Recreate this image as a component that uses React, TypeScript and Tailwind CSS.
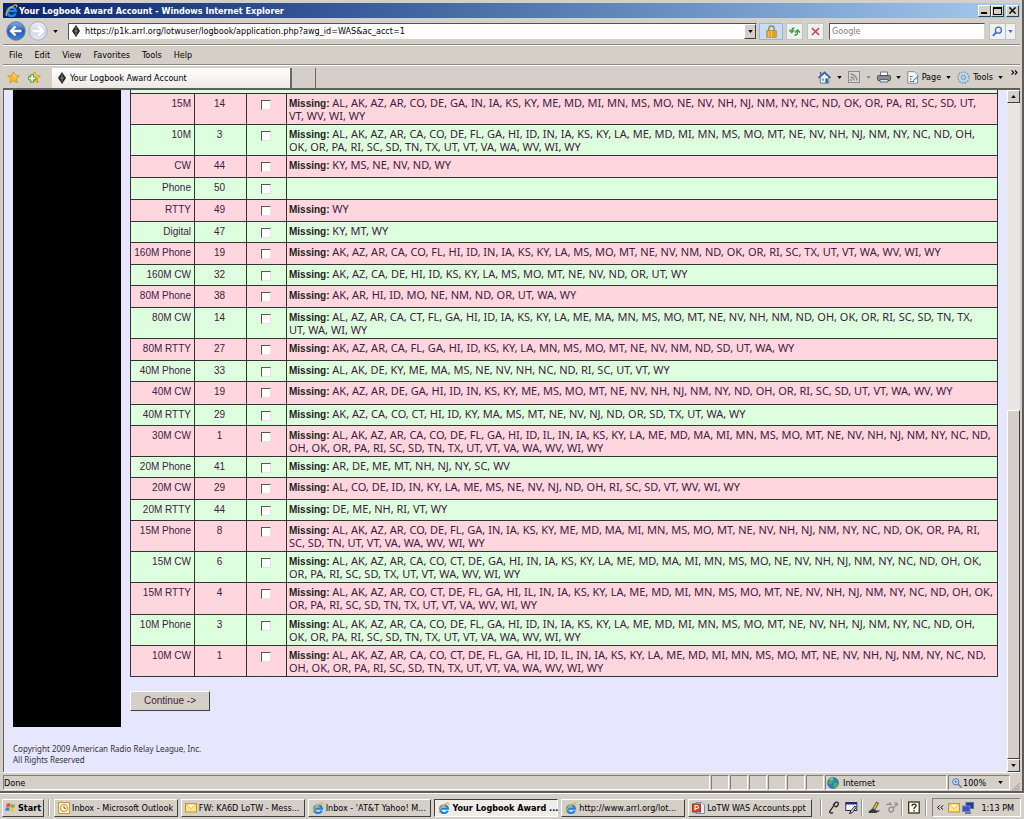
import type { ReactNode } from "react";
import clsx from "clsx";

type AwardRow = {
  name: string;
  count: number;
  missing: string[];
};

const rows: AwardRow[] = [
  { name: "15M", count: 14, missing: ["AL, AK, AZ, AR, CO, DE, GA, IN, IA, KS, KY, ME, MD, MI, MN, MS, MO, NE, NV, NH, NJ, NM, NY, NC, ND, OK, OR, PA, RI, SC, SD, UT,", "VT, WV, WI, WY"] },
  { name: "10M", count: 3, missing: ["AL, AK, AZ, AR, CA, CO, DE, FL, GA, HI, ID, IN, IA, KS, KY, LA, ME, MD, MI, MN, MS, MO, MT, NE, NV, NH, NJ, NM, NY, NC, ND, OH,", "OK, OR, PA, RI, SC, SD, TN, TX, UT, VT, VA, WA, WV, WI, WY"] },
  { name: "CW", count: 44, missing: ["KY, MS, NE, NV, ND, WY"] },
  { name: "Phone", count: 50, missing: [] },
  { name: "RTTY", count: 49, missing: ["WY"] },
  { name: "Digital", count: 47, missing: ["KY, MT, WY"] },
  { name: "160M Phone", count: 19, missing: ["AK, AZ, AR, CA, CO, FL, HI, ID, IN, IA, KS, KY, LA, MS, MO, MT, NE, NV, NM, ND, OK, OR, RI, SC, TX, UT, VT, WA, WV, WI, WY"] },
  { name: "160M CW", count: 32, missing: ["AK, AZ, CA, DE, HI, ID, KS, KY, LA, MS, MO, MT, NE, NV, ND, OR, UT, WY"] },
  { name: "80M Phone", count: 38, missing: ["AK, AR, HI, ID, MO, NE, NM, ND, OR, UT, WA, WY"] },
  { name: "80M CW", count: 14, missing: ["AL, AZ, AR, CA, CT, FL, GA, HI, ID, IA, KS, KY, LA, ME, MA, MN, MS, MO, MT, NE, NV, NH, NM, ND, OH, OK, OR, RI, SC, SD, TN, TX,", "UT, WA, WI, WY"] },
  { name: "80M RTTY", count: 27, missing: ["AK, AZ, AR, CA, FL, GA, HI, ID, KS, KY, LA, MN, MS, MO, MT, NE, NV, NM, ND, SD, UT, WA, WY"] },
  { name: "40M Phone", count: 33, missing: ["AL, AK, DE, KY, ME, MA, MS, NE, NV, NH, NC, ND, RI, SC, UT, VT, WY"] },
  { name: "40M CW", count: 19, missing: ["AK, AZ, AR, DE, GA, HI, ID, IN, KS, KY, ME, MS, MO, MT, NE, NV, NH, NJ, NM, NY, ND, OH, OR, RI, SC, SD, UT, VT, WA, WV, WY"] },
  { name: "40M RTTY", count: 29, missing: ["AK, AZ, CA, CO, CT, HI, ID, KY, MA, MS, MT, NE, NV, NJ, ND, OR, SD, TX, UT, WA, WY"] },
  { name: "30M CW", count: 1, missing: ["AL, AK, AZ, AR, CA, CO, DE, FL, GA, HI, ID, IL, IN, IA, KS, KY, LA, ME, MD, MA, MI, MN, MS, MO, MT, NE, NV, NH, NJ, NM, NY, NC, ND,", "OH, OK, OR, PA, RI, SC, SD, TN, TX, UT, VT, VA, WA, WV, WI, WY"] },
  { name: "20M Phone", count: 41, missing: ["AR, DE, ME, MT, NH, NJ, NY, SC, WV"] },
  { name: "20M CW", count: 29, missing: ["AL, CO, DE, ID, IN, KY, LA, ME, MS, NE, NV, NJ, ND, OH, RI, SC, SD, VT, WV, WI, WY"] },
  { name: "20M RTTY", count: 44, missing: ["DE, ME, NH, RI, VT, WY"] },
  { name: "15M Phone", count: 8, missing: ["AL, AK, AZ, AR, CO, DE, FL, GA, IN, IA, KS, KY, ME, MD, MA, MI, MN, MS, MO, MT, NE, NV, NH, NJ, NM, NY, NC, ND, OK, OR, PA, RI,", "SC, SD, TN, UT, VT, VA, WA, WV, WI, WY"] },
  { name: "15M CW", count: 6, missing: ["AL, AK, AZ, AR, CA, CO, CT, DE, GA, HI, IN, IA, KS, KY, LA, ME, MD, MA, MI, MN, MS, MO, NE, NV, NH, NJ, NM, NY, NC, ND, OH, OK,", "OR, PA, RI, SC, SD, TX, UT, VT, WA, WV, WI, WY"] },
  { name: "15M RTTY", count: 4, missing: ["AL, AK, AZ, AR, CO, CT, DE, FL, GA, HI, IL, IN, IA, KS, KY, LA, ME, MD, MI, MN, MS, MO, MT, NE, NV, NH, NJ, NM, NY, NC, ND, OH, OK,", "OR, PA, RI, SC, SD, TN, TX, UT, VT, VA, WV, WI, WY"] },
  { name: "10M Phone", count: 3, missing: ["AL, AK, AZ, AR, CA, CO, DE, FL, GA, HI, ID, IN, IA, KS, KY, LA, ME, MD, MI, MN, MS, MO, MT, NE, NV, NH, NJ, NM, NY, NC, ND, OH,", "OK, OR, PA, RI, SC, SD, TN, TX, UT, VT, VA, WA, WV, WI, WY"] },
  { name: "10M CW", count: 1, missing: ["AL, AK, AZ, AR, CA, CO, CT, DE, FL, GA, HI, ID, IL, IN, IA, KS, KY, LA, ME, MD, MI, MN, MS, MO, MT, NE, NV, NH, NJ, NM, NY, NC, ND,", "OH, OK, OR, PA, RI, SC, SD, TN, TX, UT, VT, VA, WA, WV, WI, WY"] },
];

const raised = "border border-t-white border-l-white border-r-[#404040] border-b-[#404040] bg-[#d4d0c8]";
const sunken = "border border-t-[#808080] border-l-[#808080] border-r-white border-b-white";

function IeIcon({ className = "size-3" }: { className?: string }) {
  return (
    <svg viewBox="0 0 16 16" className={clsx("shrink-0", className)} fill="none">
      <path d="M13 11.500A5.300 5.300 0 1113.300 8.800H4" stroke="#1f86e0" strokeWidth="3" />
      <path d="M4.500 5.500A5 5 0 0110 4" stroke="#8ed0fb" strokeWidth="1.200" />
      <path d="M2 14.500C-.5 12 6 3.500 11.500 1.500c3-1 3.500.5 2.500 2.500" stroke="#f0b428" strokeWidth="1.500" />
    </svg>
  );
}

function DiamondIcon() {
  return (
    <svg viewBox="0 0 8 12" className="h-3 w-2 shrink-0">
      <path d="M4 0l4 6-4 6-4-6z" fill="#222" />
      <path d="M4 2v8M2 6h4" stroke="#aaa" strokeWidth=".7" />
    </svg>
  );
}

function Caret({ className = "text-black" }: { className?: string }) {
  return (
    <svg viewBox="0 0 6 4" className={clsx("h-[3px] w-[5px] shrink-0", className)}>
      <path d="M0 0h6L3 4z" fill="currentColor" />
    </svg>
  );
}

function NavArrow({ forward = false }: { forward?: boolean }) {
  return (
    <svg viewBox="0 0 20 20" className="size-5">
      <defs>
        <linearGradient id={forward ? "nav-f" : "nav-b"} x1="0" y1="0" x2="0" y2="1">
          <stop offset="0" stopColor={forward ? "#f2f5f9" : "#8eb2e6"} />
          <stop offset=".5" stopColor={forward ? "#ccd5e2" : "#2458b4"} />
          <stop offset="1" stopColor={forward ? "#e4ebf4" : "#3f86dc"} />
        </linearGradient>
      </defs>
      <circle cx="10" cy="10" r="9.2" fill={forward ? "url(#nav-f)" : "url(#nav-b)"} stroke={forward ? "#9daec6" : "#5877a8"} />
      <path
        d={forward ? "M4.500 10h10M10.500 5.500L15 10l-4.500 4.500" : "M15.500 10h-10M9.500 5.500L5 10l4.500 4.500"}
        fill="none"
        stroke="#fff"
        strokeWidth="2.400"
      />
    </svg>
  );
}

function StarIcon({ plus = false }: { plus?: boolean }) {
  return (
    <svg viewBox="0 0 14 14" className="size-[13px]">
      <path d="M7 .8l1.900 4 4.400.5-3.200 3 .9 4.400L7 10.500l-4 2.200.9-4.400-3.200-3 4.400-.5z" fill="#fbb829" stroke="#d98a12" strokeWidth=".8" />
      <path d="M7 3l1 2.600 2.500.4" fill="none" stroke="#ffe9a0" />
      {plus && <path d="M3 4h3v2.500h2.500v3H6V12H3V9.500H.5v-3H3z" fill="#e2ffd8" stroke="#35a02b" />}
    </svg>
  );
}

function TitleBar() {
  return (
    <header className="flex h-[15px] items-center bg-linear-to-r from-[#0a246a] to-[#a6caf0] pr-px pl-[2px]">
      <IeIcon className="size-[13px]" />
      <h1 className="ml-px flex-1 text-[9px] leading-3 font-bold text-white">
        Your Logbook Award Account - Windows Internet Explorer
      </h1>
      <button aria-label="Minimize" className={clsx("flex h-3 w-[13px] items-end p-[2px]", raised)}>
        <span className="h-[2px] w-[6px] bg-black" />
      </button>
      <button aria-label="Restore" className={clsx("flex h-3 w-[13px] items-center justify-center", raised)}>
        <span className="h-2 w-[9px] border border-t-2 border-black" />
      </button>
      <button aria-label="Close" className={clsx("ml-[2px] flex h-3 w-[13px] items-center justify-center", raised)}>
        <svg viewBox="0 0 8 8" className="size-[7px]">
          <path d="M.5.5l7 7M7.500.5l-7 7" stroke="#000" strokeWidth="1.600" />
        </svg>
      </button>
    </header>
  );
}

function ToolButton({ label, children, className }: { label: string; children: ReactNode; className?: string }) {
  return (
    <button aria-label={label} className={clsx("flex h-[17px] items-center justify-center border", className)}>
      {children}
    </button>
  );
}

const plainTool = "border-[#b9c2d0] bg-[#f0f0ee]";

function AddressBar() {
  return (
    <div className="flex h-[27px] items-center border-b border-[#8d8a84] pr-1 pl-[3px]">
      <button aria-label="Back"><NavArrow /></button>
      <button aria-label="Forward" className="ml-[2px]"><NavArrow forward /></button>
      <button aria-label="Recent pages" className="ml-[5px] flex h-4 w-[6px] items-center"><Caret /></button>
      <div className="ml-[9px] flex h-[17px] flex-1 items-center border border-t-[#55505a] border-r-[#d4d0c8] border-b-[#d4d0c8] border-l-[#55505a] bg-white pl-[3px]">
        <DiamondIcon />
        <input
          aria-label="Address"
          className="ml-[5px] h-3 min-w-0 flex-1 bg-transparent text-[9px] leading-3 text-black outline-none"
          defaultValue="https://p1k.arrl.org/lotwuser/logbook/application.php?awg_id=WAS&ac_acct=1"
        />
        <button aria-label="Show address list" className={clsx("flex h-[15px] w-3 items-center justify-center", raised)}><Caret /></button>
      </div>
      <ToolButton label="Security report" className="ml-[2px] w-[24px] border-[#8fb6e8] bg-[#c9dcf5]">
        <svg viewBox="0 0 12 14" className="h-[13px] w-[11px]">
          <path d="M3 7V4a3 3 0 016 0v3" fill="none" stroke="#a28b4a" strokeWidth="1.500" />
          <rect x=".8" y="6" width="10.400" height="7.500" fill="#e2a325" stroke="#a8761a" strokeWidth=".6" />
          <path d="M3 6.500v7M6 6.500v7" stroke="#f6ca62" />
        </svg>
      </ToolButton>
      <ToolButton label="Refresh" className={clsx("ml-[3px] w-[17px]", plainTool)}>
        <svg viewBox="0 0 14 12" className="h-[11px] w-[13px]" fill="none" stroke="#2f9a35" strokeWidth="1.500">
          <path d="M7 2.500C5.500 2 4 3 4 5.500M1.200 4.300L4 7l2.500-2.700M7 10c2 .3 3.300-.8 3.300-4M7.500 7l2.800-2.700L13 7" />
        </svg>
      </ToolButton>
      <ToolButton label="Stop" className={clsx("ml-1 w-[17px]", plainTool)}>
        <svg viewBox="0 0 10 10" className="size-[9px]">
          <path d="M1 1l8 8M9 1L1 9" stroke="#d03440" strokeWidth="1.500" />
        </svg>
      </ToolButton>
      <input
        aria-label="Search"
        placeholder="Google"
        className="ml-[5px] h-[17px] w-[156px] border border-t-[#55505a] border-r-[#d4d0c8] border-b-[#d4d0c8] border-l-[#55505a] bg-white px-[2px] text-[9px] leading-3 outline-none placeholder:text-[#808080]"
      />
      <ToolButton label="Run search" className={clsx("ml-1 w-[17px]", plainTool)}>
        <svg viewBox="0 0 12 12" className="size-[11px]" fill="none" stroke="#3a6fd0">
          <circle cx="7" cy="4.500" r="3.300" strokeWidth="1.400" />
          <path d="M4.500 7L1 10.800" strokeWidth="2" />
        </svg>
      </ToolButton>
      <ToolButton label="Search options" className={clsx("w-[10px] border-l-0", plainTool)}>
        <Caret className="text-[#3a6fd0]" />
      </ToolButton>
    </div>
  );
}

function MenuBar() {
  return (
    <nav className="flex h-[20px] items-center gap-3 border-t border-b border-t-white border-b-[#8d8a84] pl-[6px] text-[9px] leading-3">
      {["File", "Edit", "View", "Favorites", "Tools", "Help"].map((item) => (
        <button key={item}>{item}</button>
      ))}
    </nav>
  );
}

function TabBar() {
  return (
    <div className="flex h-[23px] items-center border-t border-white pr-[2px] text-[9px] leading-3">
      <button aria-label="Favorites center" className="ml-1"><StarIcon /></button>
      <button aria-label="Add to favorites" className="ml-[8px]"><StarIcon plus /></button>
      <button className="mt-[2px] ml-[11px] flex h-[20px] w-[240px] items-center border-r-2 border-[#6b6862] bg-linear-to-b from-white to-[#eceae5] pl-[6px]">
        <DiamondIcon />
        <span className="ml-[4px]">Your Logbook Award Account</span>
      </button>
      <button aria-label="New tab" className="mt-[2px] h-[20px] w-[24px] border-r border-[#6b6862]" />
      <div className="ml-auto flex items-center">
        <button aria-label="Home" className="flex items-center gap-[6px]">
          <svg viewBox="0 0 14 14" className="size-[13px]">
            <path d="M2.500 6.500V13h9V6.500L7 2.500z" fill="#eef3fb" stroke="#5577b5" />
            <path d="M.5 7.500L7 1.500l6.500 6" fill="none" stroke="#3b5fa8" strokeWidth="1.700" />
            <path d="M8 8h2.500v5H8z" fill="#456" />
            <path d="M4 8h2.500v2.500H4z" fill="#74a3e0" />
            <path d="M2 1h1.500v3H2z" fill="#3b5fa8" />
          </svg>
          <Caret />
        </button>
        <button aria-label="Feeds" className="ml-[6px] flex items-center gap-[6px]">
          <svg viewBox="0 0 12 12" className="size-3" fill="none" stroke="#8b8b8b">
            <rect x=".5" y=".5" width="11" height="11" fill="#d9d8d4" />
            <path d="M2.500 3c3.500 0 6.500 3 6.500 6.500M2.500 6c2 0 3.500 1.500 3.500 3.500" strokeWidth="1.400" />
            <circle cx="3" cy="9" r=".7" />
          </svg>
          <Caret className="text-[#8b8b8b]" />
        </button>
        <button aria-label="Print" className="ml-[6px] flex items-center gap-[5px]">
          <svg viewBox="0 0 14 12" className="h-3 w-[14px]">
            <path d="M3.500 5V1h7v4" fill="#fff" stroke="#777" />
            <rect x=".5" y="4.500" width="13" height="5" rx="1" fill="#8a8f96" stroke="#4c5056" />
            <path d="M3 8.500h8V11H3z" fill="#d8e6f8" stroke="#4c5056" strokeWidth=".8" />
          </svg>
          <Caret />
        </button>
        <button className="ml-[6px] flex items-center gap-[5px]">
          <svg viewBox="0 0 12 13" className="mr-[-2px] h-[13px] w-3">
            <path d="M.8.7h6.700l3 3v8.500H.8z" fill="#fff" stroke="#888" />
            <path d="M3 5.500h3M3 8h2M3 10.500h4" stroke="#333" strokeDasharray="1.500 1" />
            <path d="M6.500 9.500L11.500 5" stroke="#4f9bd8" strokeWidth="1.500" />
          </svg>
          <span>Page</span>
          <Caret />
        </button>
        <button className="ml-[6px] flex items-center gap-[5px]">
          <svg viewBox="0 0 14 14" className="mr-[-2px] size-[13px]" fill="none">
            <circle cx="7" cy="7" r="5.800" stroke="#6d8eb0" strokeWidth="1.600" strokeDasharray="2 1" />
            <circle cx="7" cy="7" r="4" stroke="#b8d8f0" strokeWidth="3" />
            <circle cx="7" cy="7" r="2.300" stroke="#6d8eb0" />
          </svg>
          <span>Tools</span>
          <Caret />
        </button>
        <button aria-label="More commands" className="mb-[10px] ml-[8px]">
          <svg viewBox="0 0 8 6" className="h-[5px] w-[7px]" fill="none" stroke="#000" strokeWidth="1.300">
            <path d="M.5.5L3 3 .5 5.500M4.500.5L7 3 4.500 5.500" />
          </svg>
        </button>
      </div>
    </div>
  );
}

function AwardTable() {
  return (
    <table className="h-[584px] w-full table-fixed border-collapse text-[10px] leading-[13px] text-[#40203f]">
      <colgroup>
        <col className="w-16" />
        <col className="w-[52px]" />
        <col className="w-10" />
        <col />
      </colgroup>
      <tbody>
        {rows.map((row, index) => (
          <tr
            key={row.name}
            className={clsx(
              index % 2 === 0 ? "bg-[#ffd6de]" : "bg-[#deffde]",
              row.missing.length > 1 ? "h-[31px]" : index % 2 === 0 ? "h-[22px]" : "h-[21px]",
            )}
          >
            <th scope="row" className="border border-[#333] pt-[3px] pr-[3px] text-right align-top font-normal whitespace-nowrap">
              {row.name}
            </th>
            <td className="border border-[#333] pt-[3px] pr-[2px] text-center align-top">{row.count}</td>
            <td className="border border-[#333] pt-[6px] pr-[2px] text-center align-top">
              <input
                type="checkbox"
                aria-label={`Select ${row.name}`}
                className="mx-auto block size-[10px] appearance-none border border-t-[#555] border-r-[#e8e4de] border-b-[#e8e4de] border-l-[#555] bg-white"
              />
            </td>
            <td className="border border-[#333] px-[2px] pt-[2px] align-top whitespace-nowrap">
              {row.missing.map((line, i) => (
                <p key={line} className="h-[13px] font-['Noto_Sans',sans-serif] text-[11px] leading-[13px]">
                  {i === 0 && (
                    <b className="font-['Liberation_Sans',Arial,sans-serif] text-[10px] text-[#222]">Missing: </b>
                  )}
                  {line}
                </p>
              ))}
            </td>
          </tr>
        ))}
      </tbody>
    </table>
  );
}

function ScrollBar() {
  return (
    <div className="flex w-[13px] shrink-0 flex-col bg-[#e9e7e3]">
      <button aria-label="Scroll up" className={clsx("flex h-[13px] items-center justify-center", raised)}>
        <Caret className="rotate-180 text-black" />
      </button>
      <div className="flex-[308]" />
      <div className={clsx("flex-[348]", raised)} />
      <button aria-label="Scroll down" className={clsx("flex h-[13px] items-center justify-center", raised)}>
        <Caret />
      </button>
    </div>
  );
}

function StatusBar() {
  return (
    <footer className="flex h-[19px] items-center gap-px border-t border-white pt-px text-[9px] leading-3">
      <div className={clsx("flex h-[15px] flex-1 items-center", sunken)}>Done</div>
      {[0, 1, 2, 3, 4].map((pane) => (
        <div key={pane} className={clsx("h-[15px] w-[18px]", sunken)} />
      ))}
      <div className={clsx("h-[15px] w-[18px]", sunken)} />
      <div className={clsx("flex h-[15px] w-[122px] items-center gap-1 pl-[1px]", sunken)}>
        <svg viewBox="0 0 12 12" className="size-3">
          <circle cx="6" cy="6" r="5.500" fill="#2f7fc4" stroke="#245a86" strokeWidth=".6" />
          <path d="M2 3.500C4 .5 6 1 7 2.500S5 5 4.500 6.500 2 6 1 6.500zM7 6c2-1 4 0 4 1.500S9 11 8 11 6 8 7 6z" fill="#4bb05a" />
          <path d="M3 3c1-1.200 2-1.500 3-1.500" stroke="#c9ecff" fill="none" />
        </svg>
        Internet
      </div>
      <div className={clsx("flex h-[15px] w-[62px] items-center pl-[3px]", sunken)}>
        <svg viewBox="0 0 12 12" className="size-[10px]" fill="none" stroke="#3c6fc4">
          <circle cx="4.500" cy="4.500" r="3.700" fill="#d8ebff" strokeWidth="1.200" />
          <path d="M2.500 4.500h4M4.500 2.500v4" />
          <path d="M7.500 7.500l4 4" stroke="#777" strokeWidth="1.800" />
        </svg>
        <button className="ml-px flex items-center gap-3">100% <Caret /></button>
      </div>
      <svg viewBox="0 0 10 10" className="size-[9px] self-end" stroke="#8d8a84">
        <path d="M1 10l9-9M4 10l6-6M7 10l3-3" />
      </svg>
    </footer>
  );
}

function OutlookIcon() {
  return (
    <svg viewBox="0 0 12 12" className="size-3 shrink-0">
      <rect x=".5" y=".5" width="11" height="11" fill="#fff2c4" stroke="#d8932a" />
      <circle cx="6" cy="6" r="3.500" fill="#fff" stroke="#c98420" />
      <path d="M6 4v2.200h2" fill="none" stroke="#7a5310" />
    </svg>
  );
}

function MailIcon() {
  return (
    <svg viewBox="0 0 12 10" className="h-[10px] w-3 shrink-0">
      <rect x=".5" y=".5" width="11" height="8.500" fill="#fce38c" stroke="#c9952b" />
      <path d="M.8 1L6 5.500 11.200 1z" fill="#fffbe6" stroke="#d2a03a" strokeWidth=".7" />
    </svg>
  );
}

function PowerPointIcon() {
  return (
    <svg viewBox="0 0 13 12" className="h-3 w-[13px] shrink-0">
      <path d="M4 .5h6l2.500 2.500v8.500H4z" fill="#e8f0fc" stroke="#6f8fc0" />
      <rect x=".5" y="2" width="8" height="8" fill="#d9482a" stroke="#a83218" />
      <path d="M3 8.500v-5h2a1.500 1.500 0 010 3H3" fill="none" stroke="#fff" />
    </svg>
  );
}

const tasks = [
  { title: "Inbox - Microsoft Outlook", icon: <OutlookIcon /> },
  { title: "FW: KA6D LoTW - Mess...", icon: <MailIcon /> },
  { title: "Inbox - 'AT&T Yahoo! M...", icon: <IeIcon /> },
  { title: "Your Logbook Award ...", icon: <IeIcon />, active: true },
  { title: "http://www.arrl.org/lot...", icon: <IeIcon /> },
  { title: "LoTW WAS Accounts.ppt", icon: <PowerPointIcon /> },
];

function Divider() {
  return <span className="h-[17px] w-[2px] border-l border-r border-l-[#999690] border-r-white" />;
}

function TaskBar() {
  return (
    <footer className="flex h-[26px] items-center border-t border-white bg-[#d4d0c8] pt-[2px] pr-[3px] pl-[2px] text-[9px] leading-3">
      <button className={clsx("flex h-[18px] w-[42px] items-center gap-[2px] pl-[2px] font-bold", raised)}>
        <svg viewBox="0 0 12 12" className="size-[11px] shrink-0">
          <path d="M2 2c1.500-1 2.800-.8 4 0L5.200 5.500c-1.300-.8-2.500-.8-4 0z" fill="#e5502c" />
          <path d="M6.700 2.300c1.500.8 3 .8 4.300 0l-.9 3.400c-1.400.8-2.700.8-4.200 0z" fill="#74b92f" />
          <path d="M1 6.300c1.500-.9 2.800-.8 4 0L4.200 9.800c-1.300-.8-2.700-.8-4 0z" fill="#3a7cd8" />
          <path d="M5.700 6.600c1.500.8 2.900.8 4.200 0L9 10c-1.400.8-2.700.8-4.200 0z" fill="#f7c32e" />
        </svg>
        Start
      </button>
      <div className="mx-[4px] flex"><Divider /></div>
      <div className="flex min-w-0 flex-1 gap-[3px]">
        {tasks.map((task) => (
          <button
            key={task.title}
            className={clsx(
              "flex h-[18px] min-w-0 flex-1 basis-0 items-center gap-[2px] border pl-[3px] whitespace-nowrap",
              task.active
                ? "border-t-[#404040] border-r-white border-b-white border-l-[#404040] bg-[#efedea] font-bold"
                : "border-t-white border-r-[#404040] border-b-[#404040] border-l-white",
            )}
          >
            {task.icon}
            {task.title}
          </button>
        ))}
      </div>
      <div className="ml-2 flex shrink-0 items-center">
        <Divider />
        <svg viewBox="0 0 12 13" className="ml-[6px] h-[13px] w-3" fill="none" stroke="#222">
          <path d="M10.500 2.500a2 2 0 00-3.500-.5L5.500 4l2.500 2 1.800-1.500zM5.500 5L2 10c-1.500 2 2 2.500 3 1.500" strokeWidth="1.300" />
        </svg>
        <svg viewBox="0 0 13 13" className="ml-[5px] size-[13px]" fill="none">
          <rect x=".8" y="1.500" width="11" height="8" fill="#fff" stroke="#222c7a" />
          <path d="M.8 2.500h11" stroke="#222c7a" strokeWidth="2" />
          <path d="M10 5L6 9.500l-1.500 3 3-1L11 6.500z" fill="#ddd" stroke="#222" />
        </svg>
        <div className="ml-[3px] flex"><Divider /></div>
        <svg viewBox="0 0 13 13" className="ml-[5px] size-[13px]">
          <path d="M8.500 1l2 1L7 8.500l-2 .8V7z" fill="#f1c21c" stroke="#333" strokeWidth=".8" />
          <path d="M.5 10.500l4-3 4 2h4L8 12H1z" fill="#33383f" />
        </svg>
        <svg viewBox="0 0 13 13" className="ml-[4px] size-[13px]" fill="none" stroke="#888" strokeWidth="1.200">
          <path d="M1 3.500h5L4 1.500M12 2L8.500 7C7 4.500 3 6.500 4 9.500s5 2 4.500-2.500M12 2H9M12 2v3" />
        </svg>
        <div className="ml-[3px] flex"><Divider /></div>
        <svg viewBox="0 0 12 13" className="ml-[5px] h-[13px] w-3" fill="none">
          <rect x=".7" y="1" width="10.500" height="11" fill="#ffffe4" stroke="#222" strokeWidth="1.200" />
          <path d="M4 5c0-2.500 4-2.500 4-.3C8 6 6 6 6 8M6 9v1.500" stroke="#222" strokeWidth="1.300" />
        </svg>
        <div className="ml-[5px] flex"><Divider /></div>
        <div className={clsx("ml-[5px] flex h-[19px] w-[89px] items-center pl-1", sunken)}>
          <svg viewBox="0 0 8 6" className="h-[5px] w-[7px]" fill="none" stroke="#000" strokeWidth="1.200">
            <path d="M3 .5L.5 3 3 5.500M7 .5L4.500 3 7 5.500" />
          </svg>
          <div className="ml-1"><MailIcon /></div>
          <svg viewBox="0 0 12 12" className="ml-[2px] size-3">
            <rect x="4" y=".5" width="7.500" height="6" fill="#27379a" stroke="#5b6aa8" />
            <rect x=".5" y="4" width="7.500" height="5.500" fill="#3d53c4" stroke="#7583b0" />
            <path d="M3 11h6" stroke="#4c5a90" strokeWidth="1.500" />
          </svg>
          <time className="mr-[6px] ml-auto">1:13 PM</time>
        </div>
      </div>
    </footer>
  );
}

export default function App() {
  return (
    <div className="flex min-h-screen flex-col bg-[#d4d0c8] font-['DejaVu_Sans_Condensed','DejaVu_Sans',sans-serif] text-black">
      <div className="flex flex-1 flex-col border-r-2 border-b-2 border-[#5f5b57] pt-[3px] pr-[2px] pl-[3px]">
        <TitleBar />
        <AddressBar />
        <MenuBar />
        <TabBar />
        <div className="flex flex-1 border-t-2 border-l border-[#5f5f5b]">
          <main className="flex-1 bg-[#e6e6ff] pr-[9px] pl-[9px] font-['Liberation_Sans',Arial,sans-serif]">
            <div className="flex gap-[9px]">
              <aside className="h-[637px] w-[108px] shrink-0 bg-black" />
              <form className="min-w-0 flex-1" onSubmit={(e) => e.preventDefault()}>
                <div className="h-[3px] border-r border-l border-[#333] bg-[#deffde]" />
                <AwardTable />
                <button className={clsx("mt-[14px] h-5 w-20 text-[10px] leading-3 text-[#40203f]", raised)}>
                  Continue -&gt;
                </button>
              </form>
            </div>
            <p className="mt-4 font-['Noto_Sans',sans-serif] text-[8px] leading-[11px] text-[#333]">
              Copyright 2009 American Radio Relay League, Inc.
              <br />
              All Rights Reserved
            </p>
          </main>
          <ScrollBar />
        </div>
        <StatusBar />
      </div>
      <TaskBar />
    </div>
  );
}
